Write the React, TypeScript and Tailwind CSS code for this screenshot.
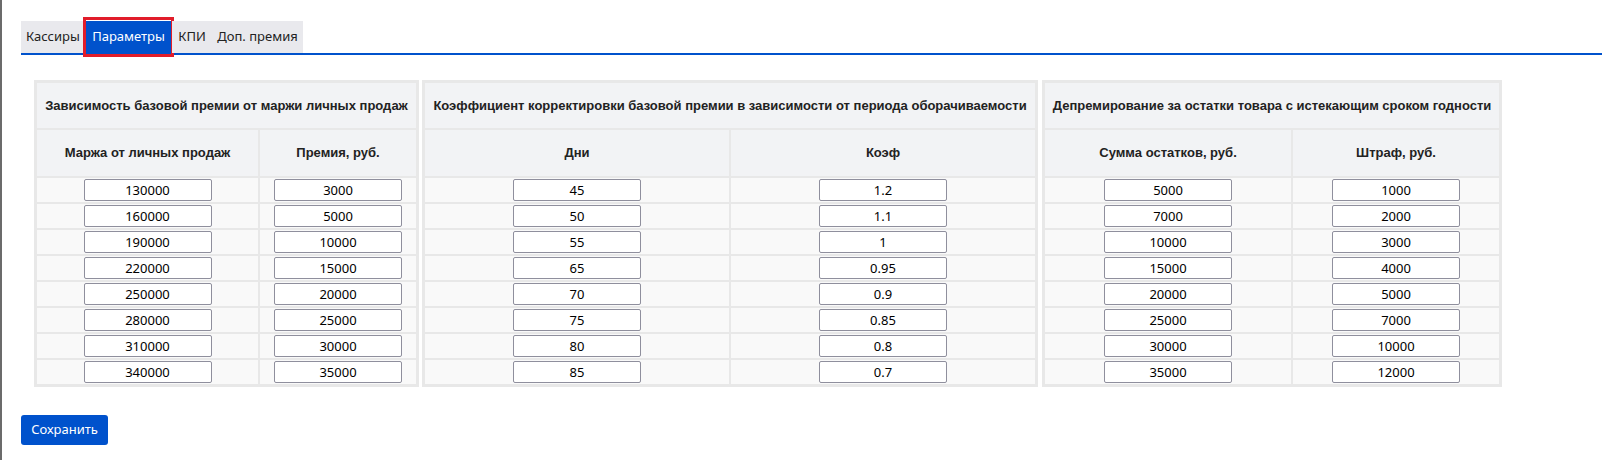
import React from "react";

type Table = {
  title: string;
  width: string;
  cols: [string, string];
  heads: [string, string];
  rows: [string, string][];
};

const tables: Table[] = [
  {
    title: "Зависимость базовой премии от маржи личных продаж",
    width: "w-[385px]",
    cols: ["w-[221px]", "w-[156px]"],
    heads: ["Маржа от личных продаж", "Премия, руб."],
    rows: [
      ["130000", "3000"],
      ["160000", "5000"],
      ["190000", "10000"],
      ["220000", "15000"],
      ["250000", "20000"],
      ["280000", "25000"],
      ["310000", "30000"],
      ["340000", "35000"],
    ],
  },
  {
    title: "Коэффициент корректировки базовой премии в зависимости от периода оборачиваемости",
    width: "w-[616px]",
    cols: ["w-[304px]", "w-[304px]"],
    heads: ["Дни", "Коэф"],
    rows: [
      ["45", "1.2"],
      ["50", "1.1"],
      ["55", "1"],
      ["65", "0.95"],
      ["70", "0.9"],
      ["75", "0.85"],
      ["80", "0.8"],
      ["85", "0.7"],
    ],
  },
  {
    title: "Депремирование за остатки товара с истекающим сроком годности",
    width: "w-[460px]",
    cols: ["w-[246px]", "w-[206px]"],
    heads: ["Сумма остатков, руб.", "Штраф, руб."],
    rows: [
      ["5000", "1000"],
      ["7000", "2000"],
      ["10000", "3000"],
      ["15000", "4000"],
      ["20000", "5000"],
      ["25000", "7000"],
      ["30000", "10000"],
      ["35000", "12000"],
    ],
  },
];

const tabs = [
  { label: "Кассиры", w: "w-[64px]" },
  { label: "Параметры", w: "w-[87px]", active: true },
  { label: "КПИ", w: "w-[40px]" },
  { label: "Доп. премия", w: "w-[91px]" },
];

function ParamTable({ t }: { t: Table }) {
  return (
    <table
      className={`${t.width} table-fixed border-separate border-spacing-[2px] border border-[#e8e8e8] bg-[#e8e8e8] shrink-0`}
    >
      <colgroup>
        <col className={t.cols[0]} />
        <col className={t.cols[1]} />
      </colgroup>
      <thead className="font-['Liberation_Sans',Arial,sans-serif] text-[13px] font-bold text-[#222]">
        <tr>
          <th colSpan={2} className="h-[45px] bg-[#f2f3f5] p-0 text-center font-bold whitespace-nowrap">
            {t.title}
          </th>
        </tr>
        <tr>
          <th className="h-[46px] bg-[#f2f3f5] p-0 text-center font-bold">{t.heads[0]}</th>
          <th className="h-[46px] bg-[#f2f3f5] p-0 text-center font-bold">{t.heads[1]}</th>
        </tr>
      </thead>
      <tbody>
        {t.rows.map((r, i) => (
          <tr key={i}>
            {r.map((v, j) => (
              <td key={j} className="h-[24px] bg-[#f9f9f9] p-0">
                <input
                  defaultValue={v}
                  className="mx-auto block h-[22px] w-[128px] rounded-[2px] border border-[#8f8f9d] bg-white px-1 text-center font-['Noto_Sans',sans-serif] text-[13px] leading-none text-black outline-none"
                />
              </td>
            ))}
          </tr>
        ))}
      </tbody>
    </table>
  );
}

export default function App() {
  return (
    <div className="min-h-[460px] border-l-2 border-[#6b6b6b] bg-white pl-[19px] pr-[20px] pt-[21px] font-['Noto_Sans',sans-serif]">
      {/* Tabs */}
      <div className="flex border-b-2 border-[#0052cc]">
        {tabs.map((tab) => (
          <div
            key={tab.label}
            className={`relative flex h-[32px] ${tab.w} items-center justify-center text-[13px] ${
              tab.active ? "bg-[#0052cc] text-white" : "bg-[#e9e9ed] text-[#222]"
            }`}
          >
            {tab.label}
            {tab.active && (
              <span className="pointer-events-none absolute -left-[2px] -right-[2px] -top-[4px] -bottom-[4px] border-[3px] border-[#e11d2a]" />
            )}
          </div>
        ))}
      </div>

      {/* Tables */}
      <div className="mt-[25px] flex pl-[13px]">
        <ParamTable t={tables[0]} />
        <div className="ml-[3px]">
          <ParamTable t={tables[1]} />
        </div>
        <div className="ml-[4px]">
          <ParamTable t={tables[2]} />
        </div>
      </div>

      <button className="mt-[28px] h-[30px] w-[87px] rounded-[3px] bg-[#0052cc] text-[13px] text-white">
        Сохранить
      </button>
    </div>
  );
}
